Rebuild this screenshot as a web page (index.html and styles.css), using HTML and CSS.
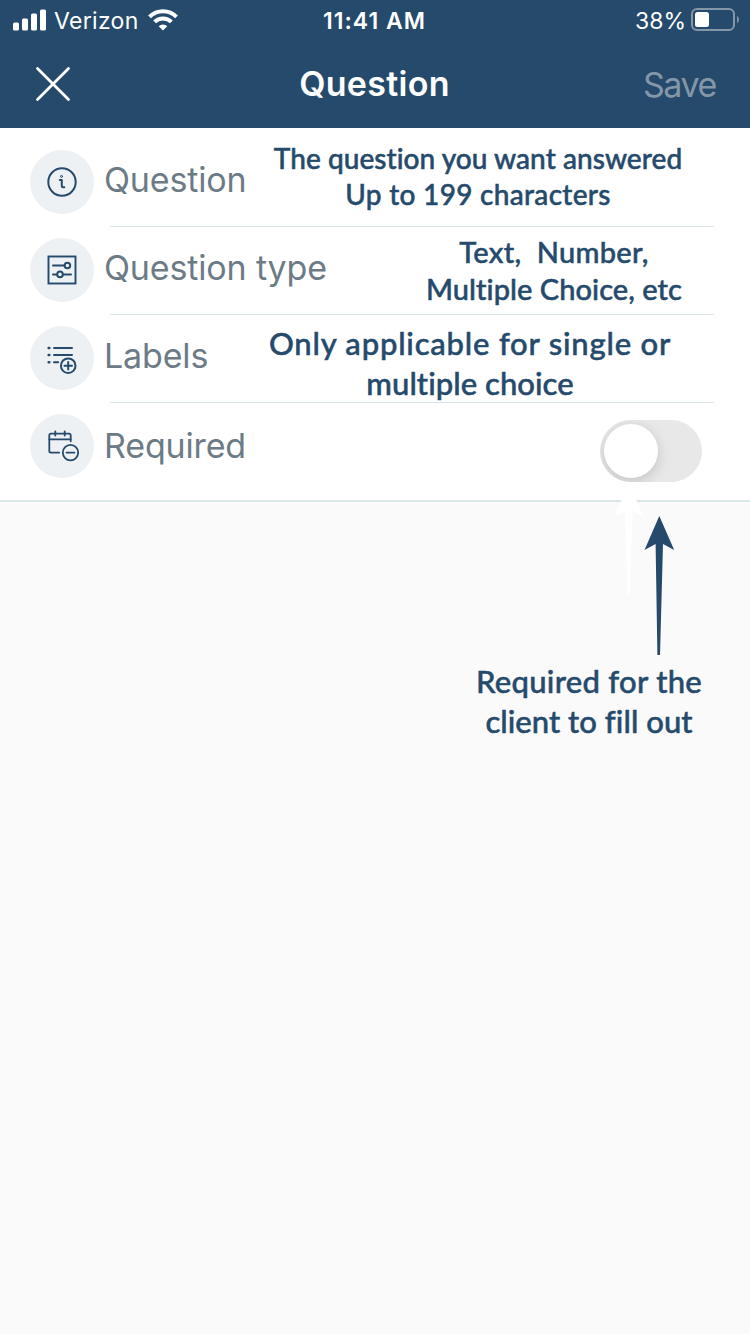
FILE: index.html
```html
<!DOCTYPE html>
<html lang="en">
<head>
  <meta charset="utf-8">
  <title>Question</title>
  <link rel="stylesheet" href="styles.css">
</head>
<body>

  <header class="header">
    <div class="status-bar">
      <div class="carrier">
        <svg class="signal" width="34" height="22" viewBox="0 0 34 22" fill="#fff">
          <rect x="0" y="13.5" width="6" height="8" rx="1.5" />
          <rect x="9" y="9.5" width="6" height="12" rx="1.5" />
          <rect x="18" y="4.5" width="6" height="17" rx="1.5" />
          <rect x="27" y="0.5" width="6" height="21" rx="1.5" />
        </svg>
        <span class="carrier-name">Verizon</span>
        <svg class="wifi" width="30" height="24" viewBox="0 0 30 24">
          <g fill="none" stroke="#fff" stroke-width="4">
            <path d="M1.5 8.8a19.2 19.2 0 0 1 27 0" />
            <path d="M6.6 13.9a11.9 11.9 0 0 1 16.8 0" />
          </g>
          <path d="M15 22.5l-4.3-4.3a6.2 6.2 0 0 1 8.6 0z" fill="#fff" />
        </svg>
      </div>
      <span class="time">11:41 AM</span>
      <div class="power">
        <span class="percent">38%</span>
        <svg width="49" height="24" viewBox="0 0 49 24">
          <rect x="1" y="1" width="42" height="21" rx="5" fill="none" stroke="#8497a9" stroke-width="2" />
          <rect x="4" y="4" width="14" height="15" rx="2.5" fill="#fff" />
          <path d="M46 8c2.6 1 2.6 6 0 7z" fill="#8497a9" />
        </svg>
      </div>
    </div>
    <div class="nav-bar">
      <svg class="close" width="36" height="36" viewBox="0 0 36 36" stroke="#fff" stroke-width="2.8" stroke-linecap="round">
        <path d="M2.5 2.5l31 31M33.5 2.5l-31 31" />
      </svg>
      <h1 class="title">Question</h1>
      <span class="save">Save</span>
    </div>
  </header>

  <main class="form">
    <div class="row">
      <svg class="icon" viewBox="0 0 64 64">
        <circle cx="32" cy="32" r="13.7" />
        <circle cx="31.5" cy="26.4" r="1" stroke-width="1" />
        <path d="M29.8 30h2v5.8q0 1.5 1.5 1.5h1" />
      </svg>
      <div class="row-body">
        <span class="label">Question</span>
        <div class="note note-question">
          <span class="line">The question you want answered</span>
          <span class="line line-wide">Up to 199 characters</span>
        </div>
      </div>
    </div>

    <div class="row">
      <svg class="icon" viewBox="0 0 64 64">
        <rect x="18.5" y="18.5" width="27" height="27" stroke-width="1.9" stroke-linejoin="miter" />
        <path d="M23 27.5h11.5M23 36.4h4M33 36.4h8" />
        <circle cx="37.4" cy="27.5" r="2.8" />
        <circle cx="30" cy="36.4" r="2.8" />
      </svg>
      <div class="row-body">
        <span class="label">Question type</span>
        <div class="note note-type">
          <span class="line line-wide">Text,&nbsp; Number,</span>
          <span class="line">Multiple Choice, etc</span>
        </div>
      </div>
    </div>

    <div class="row">
      <svg class="icon" viewBox="0 0 64 64">
        <path d="M18.6 22h.8M18.6 29h.8M18.6 36.2h.8" stroke-width="2.4" />
        <path d="M24 22h18M24 29h18M24 36.2h4.2" />
        <circle cx="38.2" cy="39.7" r="7.3" />
        <path d="M34.4 39.7h7.6M38.2 35.9v7.6" />
      </svg>
      <div class="row-body">
        <span class="label">Labels</span>
        <div class="note note-labels">
          <span class="line line-widest">Only applicable for single or</span>
          <span class="line">multiple choice</span>
        </div>
      </div>
    </div>

    <div class="row row-last">
      <svg class="icon" viewBox="0 0 64 64">
        <path d="M40.7 27.3v-6q0-1.7-1.7-1.7H21q-1.7 0-1.7 1.7V37q0 1.6 1.7 1.6h8.2" stroke-width="1.8" />
        <path d="M19.3 25.3h21.4M25.3 17.5v4M34.7 17.5v4" stroke-width="1.8" />
        <circle cx="40.5" cy="38.6" r="7.7" stroke-width="1.8" />
        <path d="M36.5 38.6h8" stroke-width="1.8" />
      </svg>
      <div class="row-body">
        <span class="label label-required">Required</span>
        <span class="toggle"><span class="knob"></span></span>
      </div>
    </div>

    <!-- arrows pointing up at the toggle -->
    <svg class="arrows" width="64" height="176" viewBox="0 0 64 176">
      <path d="M17 5L32 38 20.5 32 18 115h-2.5L13 32 2 38z" fill="#fff" />
      <path d="M47.3 37L62.2 71 51 65 48 176h-2.6L43.6 65 32.5 71z" fill="#254a6c" />
    </svg>
  </main>

  <div class="note note-required">
    <span class="line line-wide">Required for the</span>
    <span class="line">client to fill out</span>
  </div>

</body>
</html>
```
FILE: styles.css
```css
* {
  box-sizing: border-box;
}

body {
  margin: 0;
  min-height: 1334px;
  background: #fafafa;
  font-family: Inter, "Liberation Sans", sans-serif;
}

/* header */

.header {
  height: 128px;
  background: #254a6b;
  color: #fff;
}

.status-bar {
  display: grid;
  grid-template-columns: 1fr auto 1fr;
  align-items: center;
  height: 40px;
  padding: 2px 10px 0 13px;
  font-size: 23px;
}

.carrier,
.power {
  display: flex;
  align-items: center;
}

.signal {
  margin-top: -3px;
}

.carrier-name {
  margin-left: 7px;
  letter-spacing: 0.3px;
}

.wifi {
  margin: -2px 0 0 9px;
}

.time {
  font-weight: 600;
  font-size: 23px;
  letter-spacing: 1px;
  margin-left: -4px;
}

.power {
  justify-content: flex-end;
  gap: 5px;
}

.power svg {
  margin-top: -2px;
}

.nav-bar {
  display: grid;
  grid-template-columns: 1fr auto 1fr;
  align-items: center;
  height: 88px;
  padding: 0 34px 0 33px;
}

.close {
  margin-left: 2px;
}

.title {
  margin: -1px 0 0;
  font-size: 34px;
  font-weight: 600;
  letter-spacing: 0.3px;
}

.save {
  justify-self: end;
  font-size: 34px;
  letter-spacing: -1.4px;
  color: #8497a9;
}

/* form rows */

.form {
  position: relative;
  height: 374px;
  padding-top: 11px;
  background: #fff;
  border-bottom: 2px solid #dae5e8;
}

.row {
  display: flex;
  gap: 16px;
  height: 88px;
  padding: 0 36px 0 30px;
}

.icon {
  flex: none;
  width: 64px;
  height: 64px;
  margin-top: 11px;
  border-radius: 50%;
  background: #edf1f4;
  fill: none;
  stroke: #254a6c;
  stroke-width: 2;
  stroke-linecap: round;
  stroke-linejoin: round;
}

.row-body {
  flex: 1;
  display: flex;
  justify-content: space-between;
  border-bottom: 1px solid #d9e4e9;
}

.row-last .row-body {
  border-bottom: none;
}

.label {
  margin-left: -6px;
  padding-top: 21px;
  font-size: 34px;
  line-height: 40px;
  letter-spacing: -0.15px;
  white-space: nowrap;
  color: #6c7b85;
}

.label-required {
  padding-top: 23px;
}

/* notes beside the fields */

.note {
  flex: none;
  font-family: Lato, sans-serif;
  font-weight: 500;
  font-variant-ligatures: none;
  color: #254a6c;
  -webkit-text-stroke: 0.5px #254a6c;
  text-align: center;
}

.line {
  display: block;
  letter-spacing: 0.05px;
  white-space: nowrap;
}

.line-wide {
  letter-spacing: 0.3px;
}

.line-widest {
  letter-spacing: 0.8px;
}

.note-question {
  width: 412px;
  margin-right: 30px;
  padding-top: 1px;
  font-size: 28px;
  line-height: 36px;
}

.note-type {
  width: 258px;
  margin-right: 31px;
  padding-top: 6px;
  font-size: 29px;
  line-height: 37px;
}

.note-labels {
  width: 404px;
  margin-right: 42px;
  padding-top: 8px;
  font-size: 31px;
  line-height: 40px;
}

.note-required {
  width: 226px;
  margin: 159px 48px 0 auto;
  font-size: 31px;
  line-height: 40px;
}

.toggle {
  width: 102px;
  height: 62px;
  margin: 17px 12px 0 0;
  padding: 4px;
  border-radius: 31px;
  background: #e8e8e8;
  overflow: hidden;
}

.knob {
  display: block;
  width: 54px;
  height: 54px;
  border-radius: 50%;
  background: #fff;
  box-shadow: 0 4px 14px rgba(0, 0, 0, 0.16);
}

.arrows {
  position: absolute;
  top: 351px;
  left: 612px;
}
```
